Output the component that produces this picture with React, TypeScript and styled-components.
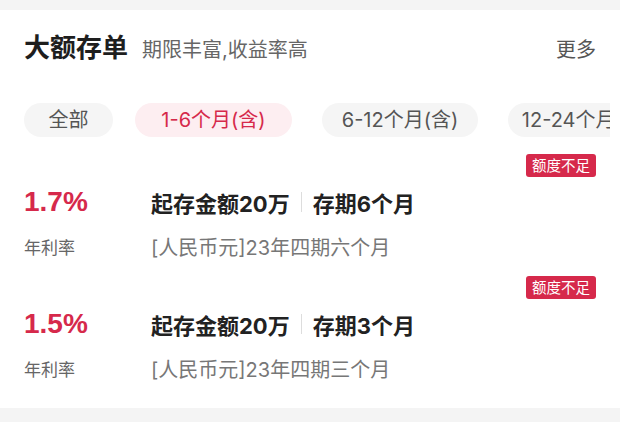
import styled, { createGlobalStyle } from "styled-components";

const font = `"Inter", "Noto Sans CJK SC", sans-serif`;

const colors = {
  page: "#f4f4f4",
  red: "#d6294b",
  redSoft: "#fdeef1",
  pill: "#f5f5f5",
  title: "#1e1e1e",
  text: "#222222",
  grey: "#666666",
  greyLight: "#777777",
  line: "#dddddd",
};

const tabs = [
  { label: "全部", width: 89 },
  { label: "1-6个月(含)", width: 157, active: true },
  { label: "6-12个月(含)", width: 156 },
  { label: "12-24个月(含)", width: 156 },
];

const products = [
  { rate: "1.7%", amount: "起存金额20万", term: "存期6个月", name: "[人民币元]23年四期六个月" },
  { rate: "1.5%", amount: "起存金额20万", term: "存期3个月", name: "[人民币元]23年四期三个月" },
];

const GlobalStyle = createGlobalStyle`
  body {
    margin: 0;
    background: ${colors.page};
    font-family: ${font};
  }
`;

export default function App() {
  return (
    <>
      <GlobalStyle />
      <Card>
        <Header>
          <Title>大额存单</Title>
          <Subtitle>期限丰富,收益率高</Subtitle>
          <More>更多</More>
        </Header>
        <Tabs>
          {tabs.map((t) => (
            <Pill key={t.label} $w={t.width} $active={!!t.active}>
              {t.label}
            </Pill>
          ))}
        </Tabs>
        {products.map((p) => (
          <Product key={p.name}>
            <BadgeLine>
              <Badge>额度不足</Badge>
            </BadgeLine>
            <Body>
              <Rate>{p.rate}</Rate>
              <Main>
                {p.amount}
                <Divider />
                {p.term}
              </Main>
              <RateLabel>年利率</RateLabel>
              <Name>{p.name}</Name>
            </Body>
          </Product>
        ))}
      </Card>
    </>
  );
}

const Card = styled.div`
  margin-top: 10px;
  height: 398px;
  box-sizing: border-box;
  background: #fff;
  padding: 20px 24px 0;
  overflow: hidden;
`;

const Header = styled.div`
  display: flex;
  align-items: baseline;
  height: 36px;
  line-height: 36px;
`;

const Title = styled.span`
  font-size: 26px;
  font-weight: 700;
  color: ${colors.title};
`;

const Subtitle = styled.span`
  margin-left: 14px;
  font-size: 20px;
  color: ${colors.grey};
`;

const More = styled.span`
  margin-left: auto;
  font-size: 20px;
  color: #555;
`;

const Tabs = styled.div`
  display: flex;
  gap: 30px;
  margin-top: 37px;
  margin-right: -14px;
  overflow: hidden;
`;

const Pill = styled.div<{ $w: number; $active: boolean }>`
  flex: none;
  width: ${(p) => p.$w}px;
  height: 34px;
  line-height: 34px;
  border-radius: 17px;
  text-align: center;
  white-space: nowrap;
  font-size: 20px;
  background: ${(p) => (p.$active ? colors.redSoft : colors.pill)};
  color: ${(p) => (p.$active ? colors.red : "#555")};
  &:first-child {
    margin-right: -8px;
  }
`;

const Product = styled.div`
  padding-top: 17px;
  padding-bottom: 16px;
  &:last-child {
    padding-bottom: 0;
  }
  & + & {
    padding-top: 0;
  }
`;

const BadgeLine = styled.div`
  display: flex;
  justify-content: flex-end;
`;

const Badge = styled.span`
  height: 23px;
  line-height: 23px;
  padding: 0 6px;
  border-radius: 3px;
  background: ${colors.red};
  color: #fff;
  font-size: 14.5px;
`;

const Body = styled.div`
  display: grid;
  grid-template-columns: 127px 1fr;
  grid-template-rows: 36px 28px;
  row-gap: 12px;
  margin-top: 7px;
  align-items: center;
`;

const Rate = styled.div`
  font-family: "Liberation Sans", "Noto Sans", sans-serif;
  font-size: 28px;
  font-weight: 700;
  color: ${colors.red};
`;

const Main = styled.div`
  display: flex;
  align-items: center;
  font-size: 22px;
  font-weight: 700;
  color: ${colors.text};
`;

const Divider = styled.span`
  width: 1px;
  height: 20px;
  margin: 0 11px;
  background: ${colors.line};
`;

const RateLabel = styled.div`
  font-size: 17px;
  color: ${colors.grey};
`;

const Name = styled.div`
  font-size: 20px;
  color: ${colors.greyLight};
`;
